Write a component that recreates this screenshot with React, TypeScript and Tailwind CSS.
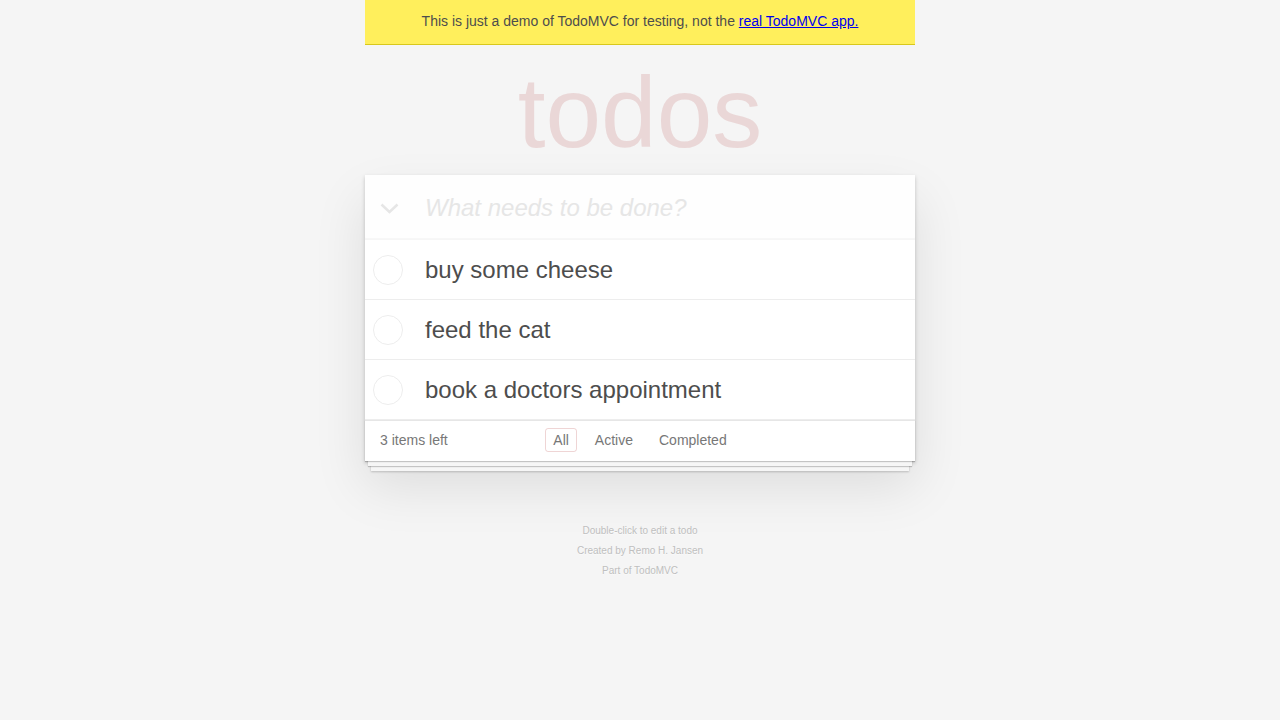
import { useState } from "react";

type Todo = { id: number; title: string; done: boolean };

const initialTodos: Todo[] = [
  { id: 1, title: "buy some cheese", done: false },
  { id: 2, title: "feed the cat", done: false },
  { id: 3, title: "book a doctors appointment", done: false },
];

const filters = ["All", "Active", "Completed"] as const;

function Circle() {
  return (
    <svg width="30" height="30" viewBox="0 0 30 30" className="block">
      <circle cx="15" cy="15" r="14.5" fill="none" stroke="#ededed" strokeWidth="1" />
    </svg>
  );
}

export default function App() {
  const [todos] = useState(initialTodos);
  const [filter, setFilter] = useState<(typeof filters)[number]>("All");
  const left = todos.filter((t) => !t.done).length;

  return (
    <div className="min-h-screen bg-[#f5f5f5] font-['Liberation_Sans',Arial,sans-serif] text-[14px] leading-[19.6px] text-[#4d4d4d]">
      <div className="mx-auto w-[550px]">
        <div className="flex h-[45px] items-center justify-center border-b border-[#d8c81c] bg-[#ffef5c]">
          <span>
            This is just a demo of TodoMVC for testing, not the{" "}
            <a href="#" className="text-[#0000ee] underline">
              real TodoMVC app.
            </a>
          </span>
        </div>

        <header className="h-[130px] pt-[17px]">
          <h1 className="text-center text-[100px] leading-[100px] font-normal text-[rgba(175,47,47,0.15)]">todos</h1>
        </header>

        <section className="bg-white shadow-[0_2px_4px_0_rgba(0,0,0,0.2),0_25px_50px_0_rgba(0,0,0,0.1)]">
          <div className="flex items-center bg-[rgba(0,0,0,0.003)] shadow-[inset_0_-2px_1px_rgba(0,0,0,0.03)]">
            <div className="flex w-[60px] items-center pl-[15px] pt-[2px]">
              <svg width="19" height="11" viewBox="0 0 19 11" className="block">
                <polyline points="1.5,1.5 9.5,9 17.5,1.5" fill="none" stroke="#e6e6e6" strokeWidth="2.5" />
              </svg>
            </div>
            <input
              className="flex-1 bg-transparent py-[16px] pr-[16px] text-[24px] leading-[33px] text-[#4d4d4d] outline-none placeholder:italic placeholder:text-[#e6e6e6]"
              placeholder="What needs to be done?"
            />
          </div>

          <ul>
            {todos.map((todo) => (
              <li key={todo.id} className="flex items-center border-b border-[#ededed]">
                <div className="w-[60px] pl-[8px]">
                  <Circle />
                </div>
                <label className="py-[15px] pr-[15px] text-[24px] leading-[29px] text-[#4d4d4d]">{todo.title}</label>
              </li>
            ))}
          </ul>

          <footer className="grid h-[41px] grid-cols-[1fr_auto_1fr] items-center border-t border-[#e6e6e6] px-[15px] pb-[2px] text-[#777] shadow-[0_1px_1px_rgba(0,0,0,0.2),0_8px_0_-3px_#f6f6f6,0_9px_1px_-3px_rgba(0,0,0,0.2),0_16px_0_-6px_#f6f6f6,0_17px_2px_-6px_rgba(0,0,0,0.2)]">
            <span className="leading-[20px]">{left} items left</span>
            <div className="flex h-[20px] items-center gap-[10px] px-[3px]">
              {filters.map((f) => (
                <button
                  key={f}
                  type="button"
                  onClick={() => setFilter(f)}
                  className={
                    f === filter
                      ? "rounded-[3px] border border-[rgba(175,47,47,0.2)] px-[7px] py-[3px] leading-[16px] text-[#777]"
                      : "rounded-[3px] border border-transparent px-[7px] py-[3px] leading-[16px] text-[#777]"
                  }
                >
                  {f}
                </button>
              ))}
            </div>
            <span />
          </footer>
        </section>

        <div className="mt-[65px] flex flex-col gap-[10px] text-center text-[10px] leading-[10px] text-[#bfbfbf] [text-shadow:0_1px_0_rgba(255,255,255,0.5)]">
          <p>Double-click to edit a todo</p>
          <p>Created by Remo H. Jansen</p>
          <p>Part of TodoMVC</p>
        </div>
      </div>
    </div>
  );
}
